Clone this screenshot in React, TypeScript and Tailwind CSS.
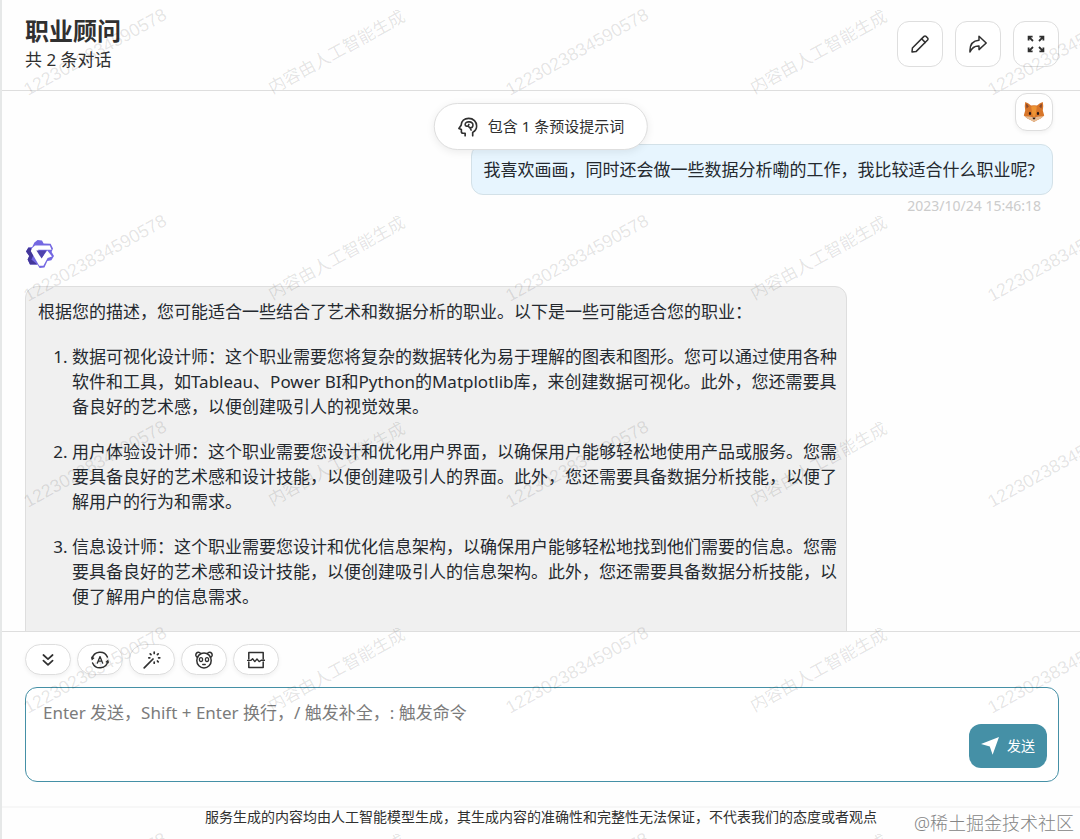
import React from "react";

const MARK_NUMBER = "1223023834590578";
const MARK_TEXT = "内容由人工智能生成";

type IconProps = { children: React.ReactNode; className?: string };

function Icon({ children, className = "size-[18px]" }: IconProps) {
  return (
    <svg
      viewBox="0 0 18 18"
      className={className}
      fill="none"
      stroke="currentColor"
      strokeWidth="1.5"
      strokeLinecap="round"
      strokeLinejoin="round"
      aria-hidden="true"
    >
      {children}
    </svg>
  );
}

const PencilIcon = () => (
  <Icon>
    <path d="M1 17 L1.4 13 L13 1.4 Q14 .6 15 1.4 L16.6 3 Q17.4 4 16.6 5 L5 16.6 Z" />
    <path d="M10.6 3.8 L14.2 7.4" />
  </Icon>
);

const ShareIcon = () => (
  <Icon>
    <path d="M10 1.2 L17.2 8 L10 14.6 V11 C5.6 10.8 3 12.4 1 17 C.6 10 3.8 5.6 10 5.2 Z" />
  </Icon>
);

const ExpandIcon = () => (
  <Icon>
    <path strokeWidth="1.8" strokeLinecap="butt" strokeLinejoin="miter" d="M1.6 5.6 V1.6 H5.6 M1.6 1.6 L6 6 M12.4 1.6 H16.4 V5.6 M16.4 1.6 L12 6 M1.6 12.4 V16.4 H5.6 M1.6 16.4 L6 12 M12.4 16.4 H16.4 V12.4 M16.4 16.4 L12 12" />
  </Icon>
);

const BrainIcon = () => (
  <Icon className="size-5">
    <path d="M6.6 16.8 V14.6 H4.8 Q3.2 14.6 3.2 13 V11.2 L1 10.4 L3 7.4 C3.2 3.6 6 1.2 9.8 1.2 C14 1.2 17 4.2 17 8 C17 10.8 15.6 12.4 13.4 13.8 V16.8" />
    <path strokeWidth="1.4" d="M6.6 6.8 C6.6 5 8.4 4.2 10 4.4 C12.4 4.2 14 5.8 13.6 7.8 C13.4 9.4 12.2 9.8 11 9.8 L12 11.8 M6.6 6.8 C6.8 8.4 8 8.4 9.2 8.2 L11 9.8 M10 6.6 L9.2 8.2" />
  </Icon>
);

const BottomIcon = () => (
  <Icon>
    <path strokeWidth="1.7" d="M4.4 4 L9 8.2 L13.6 4 M4.4 9.6 L9 13.8 L13.6 9.6" />
  </Icon>
);

const AutoIcon = () => (
  <Icon>
    <path d="M1.2 7.6 A8 8 0 0 1 16.4 6 M16.8 10.4 A8 8 0 0 1 1.6 12" />
    <path fill="currentColor" stroke="none" d="M0 5.6 L3.6 7 L.8 9.6 Z M18 12.4 L14.4 11 L17.2 8.4 Z" />
    <path strokeWidth="1.3" d="M6.3 12.2 L9 5.6 L11.7 12.2 M7.2 10.2 H10.8" />
  </Icon>
);

const WandIcon = () => (
  <Icon>
    <path strokeWidth="1.7" d="M1.2 16.8 L10 8" />
    <path strokeWidth="1.7" d="M11.2 1.2 V2.4 M7.2 2.8 L8 3.6 M5.8 6.8 H6.8 M15.2 2.8 L14.4 3.6 M16.8 6.8 H15.6 M11.2 12.2 V11.2 M15.2 10.8 L14.4 10" />
  </Icon>
);

const PandaIcon = () => (
  <Icon>
    <path d="M5.8 2.6 C3.6 -.2 .2 1.8 1 4.8 Q1.4 6 2.6 6.4 M12.2 2.6 C14.4 -.2 17.8 1.8 17 4.8 Q16.6 6 15.4 6.4" />
    <path d="M9 2 C5 2 1.8 5.2 1.8 9.4 C1.8 13.8 5 17 9 17 S16.2 13.8 16.2 9.4 C16.2 5.2 13 2 9 2 Z" />
    <ellipse cx="6" cy="8.6" rx="1.6" ry="2" strokeWidth="1.3" />
    <ellipse cx="12" cy="8.6" rx="1.6" ry="2" strokeWidth="1.3" />
    <path d="M7.8 13.6 H10.2" />
  </Icon>
);

const BreakIcon = () => (
  <Icon>
    <path d="M1.8 8 V1.4 H16.2 V8 M1.8 11 V16.6 H16.2 V11" />
    <path strokeWidth="1.4" d="M.6 9.4 H3.8 L5.6 7.8 L7.8 10.6 L10 8 L12.2 10.6 L14.2 9.2 H17.4" />
  </Icon>
);

const SendIcon = () => (
  <svg viewBox="0 0 18 18" className="size-[18px]" fill="currentColor" aria-hidden="true">
    <path d="M18 0 L11.6 17.8 L8.8 9.6 L0 7 Z" />
  </svg>
);

const FoxIcon = () => (
  <svg viewBox="0 0 22 22" className="size-[22px]" aria-hidden="true">
    <path fill="#d8762a" d="M2.2 1 Q5 1.6 8 4.6 Q11 3.8 14 4.6 Q17 1.6 19.8 1 Q20.8 5.6 19.8 9.6 L21.2 14.6 L17.6 17.6 L13.4 19.4 L11 21 L8.6 19.4 L4.4 17.6 L.8 14.6 L2.2 9.6 Q1.2 5.6 2.2 1 Z" />
    <path fill="#8a4a2c" d="M3.2 2.6 Q5 3.8 5.8 5.6 L3.6 7.6 Q2.8 5.2 3.2 2.6 Z M18.8 2.6 Q17 3.8 16.2 5.6 L18.4 7.6 Q19.2 5.2 18.8 2.6 Z" />
    <path fill="#ee9434" d="M8.2 5.4 Q11 4.6 13.8 5.4 L12.8 13 L11 17 L9.2 13 Z" />
    <path fill="#e6bd96" d="M1.4 15.2 L6.4 15.4 L9.8 16.2 H12.2 L15.6 15.4 L20.6 15.2 L17.6 17.6 L13.4 19.4 L11 21 L8.6 19.4 L4.4 17.6 Z" />
    <ellipse cx="7" cy="12.4" rx="1.1" ry="1.6" fill="#2a1a16" />
    <ellipse cx="15" cy="12.4" rx="1.1" ry="1.6" fill="#2a1a16" />
    <path fill="#2a1a16" d="M9.4 16.8 Q11 16 12.6 16.8 Q12 18.4 11 18.4 Q10 18.4 9.4 16.8 Z" />
  </svg>
);

const BotLogo = () => (
  <svg viewBox="0 0 30 30" className="size-[30px]" role="img" aria-label="AI">
    <path fill="#7468e2" d="M9.4 3.6 L12.6 1 L17 1.4 L18.6 4.4 L25.6 4.8 L28 9.6 L26.6 13 L29 17 L26.4 21.2 L22.4 22 L19.4 28.4 L14.6 29 L12.4 25.6 L5 25.4 L2.6 20.6 L4.2 17 L1 12.4 L3.4 8.4 L7.2 8 Z" />
    <path fill="#43379a" d="M1 12.4 L3.4 8.4 L5.6 9 L9 15 L6.4 20.4 L12.4 25.6 L5 25.4 L2.6 20.6 L4.2 17 Z" />
    <path fill="#ffffff" d="M7.2 9 L10 6.4 H24.8 L26.6 10.8 H13 L17.2 18.4 L22.2 11.4 L27 17.4 L22.6 19 L18.4 26.8 H14.2 L5.8 12 Z" />
    <path fill="#4f43ad" d="M11.4 11.6 H21.4 L16.6 19.6 Z" />
  </svg>
);

function HeaderButton({ label, children }: { label: string; children: React.ReactNode }) {
  return (
    <button
      type="button"
      aria-label={label}
      className="flex size-[46px] items-center justify-center rounded-xl border border-[#dedede] bg-white"
    >
      {children}
    </button>
  );
}

function ToolButton({ label, children }: { label: string; children: React.ReactNode }) {
  return (
    <button
      type="button"
      aria-label={label}
      className="flex h-[31px] w-[46px] items-center justify-center rounded-full border border-[#dedede] bg-white shadow-[0_2px_4px_rgba(0,0,0,0.05)]"
    >
      {children}
    </button>
  );
}

const careers = [
  "数据可视化设计师：这个职业需要您将复杂的数据转化为易于理解的图表和图形。您可以通过使用各种软件和工具，如Tableau、Power BI和Python的Matplotlib库，来创建数据可视化。此外，您还需要具备良好的艺术感，以便创建吸引人的视觉效果。",
  "用户体验设计师：这个职业需要您设计和优化用户界面，以确保用户能够轻松地使用产品或服务。您需要具备良好的艺术感和设计技能，以便创建吸引人的界面。此外，您还需要具备数据分析技能，以便了解用户的行为和需求。",
  "信息设计师：这个职业需要您设计和优化信息架构，以确保用户能够轻松地找到他们需要的信息。您需要具备良好的艺术感和设计技能，以便创建吸引人的信息架构。此外，您还需要具备数据分析技能，以便了解用户的信息需求。",
];

function Watermarks() {
  return (
    <div aria-hidden="true" className="pointer-events-none absolute inset-0 overflow-hidden">
      <div className="absolute -top-[51px] -left-[27px] grid auto-rows-[206px] grid-cols-[repeat(5,241px)]">
        {Array.from({ length: 25 }, (_, i) => (
          <span key={i} className="flex items-center justify-center">
            <span
              className={
                (i % 5) % 2 === 0
                  ? "-rotate-[29deg] font-['Liberation_Sans',sans-serif] text-lg whitespace-nowrap text-black/11"
                  : "-rotate-[29deg] text-[17px] whitespace-nowrap text-black/11"
              }
            >
              {(i % 5) % 2 === 0 ? MARK_NUMBER : MARK_TEXT}
            </span>
          </span>
        ))}
      </div>
    </div>
  );
}

export default function App() {
  return (
    <div className="relative flex h-screen flex-col overflow-hidden border-l-2 border-[#e6e8e8] bg-[#fefefe] font-['Noto_Sans','Noto_Sans_CJK_SC',sans-serif] text-[#303030]">
      <header className="flex shrink-0 items-center justify-between border-b border-[#dedede] pt-[15px] pr-[21px] pb-[17px] pl-[23px]">
        <div>
          <h1 className="text-2xl leading-8 font-bold">职业顾问</h1>
          <p className="text-[17px] leading-[26px]">共 2 条对话</p>
        </div>
        <div className="flex gap-3">
          <HeaderButton label="编辑"><PencilIcon /></HeaderButton>
          <HeaderButton label="分享"><ShareIcon /></HeaderButton>
          <HeaderButton label="全屏"><ExpandIcon /></HeaderButton>
        </div>
      </header>

      <main className="relative flex min-h-0 flex-1 flex-col overflow-hidden pr-[27px] pl-[23px]">
        <button
          type="button"
          className="absolute top-3 left-1/2 flex h-[47px] -translate-x-1/2 items-center gap-[10px] rounded-full border border-[#dedede] bg-white px-[23px] text-[15px] whitespace-nowrap shadow-[0_2px_8px_rgba(0,0,0,0.08)]"
        >
          <BrainIcon />
          包含 1 条预设提示词
        </button>

        <section className="flex shrink-0 flex-col items-end pt-[2px]">
          <div className="flex size-[38px] items-center justify-center rounded-xl border border-[#dedede] bg-white shadow-[0_2px_4px_rgba(0,0,0,0.05)]">
            <FoxIcon />
          </div>
          <p className="mt-[13px] rounded-xl border border-[#d3e1e8] bg-[#e7f5fe] py-3 pr-[17px] pl-3 text-[17px] leading-[25px] text-[#24292f]">
            我喜欢画画，同时还会做一些数据分析嘞的工作，我比较适合什么职业呢?
          </p>
          <time className="pr-3 text-sm leading-[22px] text-[#cccccc]">2023/10/24 15:46:18</time>
        </section>

        <section className="flex shrink-0 flex-col items-start pt-[22px]">
          <BotLogo />
          <article className="mt-[17px] w-4/5 rounded-xl border border-[#dedede] bg-[#f0f0f0] px-3 py-3 text-[17px] leading-[25px] text-[#24292f]">
            <p>根据您的描述，您可能适合一些结合了艺术和数据分析的职业。以下是一些可能适合您的职业：</p>
            <ol className="mt-5 -mr-2 list-decimal space-y-5 pl-[34px]">
              {careers.map((text) => (
                <li key={text}>{text}</li>
              ))}
            </ol>
            <p className="mt-5">希望这些建议对您有所帮助。</p>
          </article>
        </section>
      </main>

      <section className="shrink-0 border-t border-[#dedede] px-[23px] pt-3 pb-6">
        <div className="flex gap-[6px]">
          <ToolButton label="滚到最新"><BottomIcon /></ToolButton>
          <ToolButton label="自动主题"><AutoIcon /></ToolButton>
          <ToolButton label="快捷指令"><WandIcon /></ToolButton>
          <ToolButton label="所有面具"><PandaIcon /></ToolButton>
          <ToolButton label="清除聊天"><BreakIcon /></ToolButton>
        </div>
        <div className="relative mt-3 -mr-[2px]">
          <textarea
            aria-label="消息"
            placeholder="Enter 发送，Shift + Enter 换行，/ 触发补全，: 触发命令"
            className="block h-[95px] w-full resize-none rounded-xl border border-[#4590a6] bg-white py-3 pr-28 pl-[17px] text-[17px] leading-[26px] outline-none placeholder:text-[#7b7b7b]"
          />
          <button
            type="button"
            className="absolute right-3 bottom-[14px] flex h-11 items-center gap-2 rounded-xl bg-[#4590a6] px-3 text-sm text-white"
          >
            <SendIcon />
            发送
          </button>
        </div>
      </section>

      <footer className="relative flex h-[33px] shrink-0 items-start justify-center border-t-2 border-[#f7f7f7] text-sm leading-[18px]">
        <p>服务生成的内容均由人工智能模型生成，其生成内容的准确性和完整性无法保证，不代表我们的态度或者观点</p>
        <span className="absolute right-[6px] bottom-0 text-[18px] leading-8 font-light text-[#858585]">@稀土掘金技术社区</span>
      </footer>

      <Watermarks />
    </div>
  );
}
